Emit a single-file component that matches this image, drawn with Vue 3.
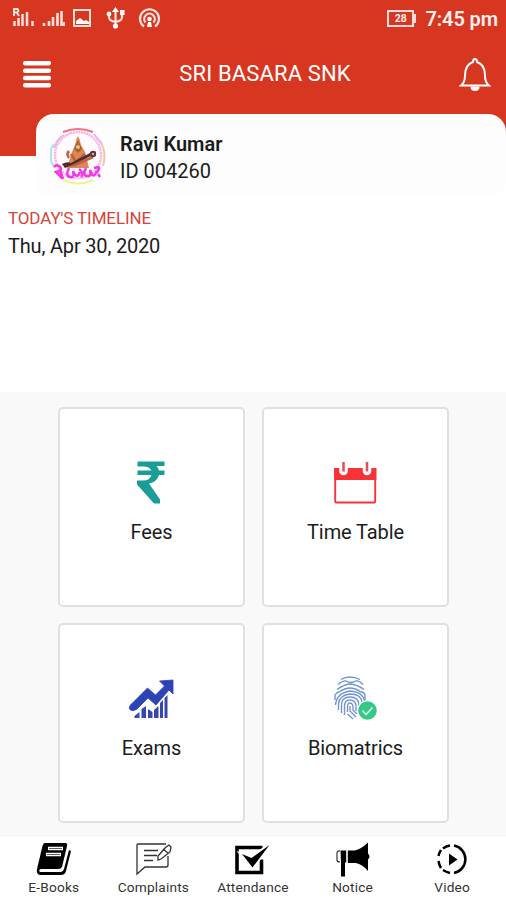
<script setup>
const prints = [
  'M341 679.500q4-2.500 9-2.500t10 2.500',
  'M338 684.500q5-4 8-3.500 5 3 10 0 3-.5 7 3.500',
  'M337 689.500q7-5 13-5.500 7 .5 14 5.500',
  'M335 700v-5q2-3 4-3 6-4 11-4t11 4q3 0 4 3v5',
  'M335.500 705q1-12 14.500-14 14 1 15 12',
  'M338.500 710v-6q1-9 11.500-10 11 0 12 8',
  'M341.500 713v-8q0-8 8.500-8t9 8v1',
  'M344.500 715v-9q0-6 5.500-6t6 6v5',
  'M347.500 712v-5q0-4 2.500-4t3 4v3l4 4',
  'M350 706v5l6 6',
  'M347.500 714l5.500 5'
]
</script>

<template>
  <main class="screen">
    <section class="hero">
      <div class="status">
        <svg class="status-icons" viewBox="0 0 170 37" fill="none" stroke="#ffe1dc">
          <path d="M14.500 26v-5M18.500 26v-8M22.500 26V14M27 26V12M32.500 26v-5" stroke-width="2.500" />
          <path d="M14 16V9h3.500q2 2-.5 3.500h-3M17 13l2 3" stroke-width="2" />
          <path d="M44 26v-3M49 26v-5M53 26v-9M57.500 26V13M61.500 26V11" stroke-width="2.600" />
          <path d="M61 25h3v-3" stroke-width="1.800" />
          <path d="M74 10h16v16H74z" stroke-width="2" />
          <path d="M76 24v-3l4-3 4 3 2-1 3 2v2z" fill="#fff" stroke="none" />
          <path d="M115.500 10v17M109 14v3q0 4 6.500 5 6.500-1 6.500-5v-4" stroke-width="2.200" />
          <path d="M112 12l3.500-5 3.500 5z" fill="#fff" stroke="none" />
          <g fill="#fff" stroke="none"><circle cx="109" cy="14" r="2.400" /><circle cx="115.500" cy="26" r="2.600" /><path d="M120 10h4.500v5H120z" /></g>
          <path d="M144 26.500a9.500 9.500 0 1 1 11 0M145.500 22.500a5.300 5.300 0 1 1 8 0" stroke-width="2.200" />
          <path d="M147 27l1-5h3l1 5z" fill="#fff" stroke="none" /><circle cx="149.500" cy="19" r="2.300" fill="#fff" stroke="none" />
        </svg>
        <div class="clock">
          <span class="battery"><span class="level">28</span><i class="cap"></i></span>
          <span class="time">7:45 pm</span>
        </div>
      </div>
      <header class="bar">
        <svg class="menu" viewBox="0 0 30 28" fill="#fff"><rect x="1" y="0" width="28" height="4.600" rx="2" /><rect x="1" y="7.400" width="28" height="4.600" rx="2" /><rect x="1" y="14.700" width="28" height="4.600" rx="2" /><rect x="1" y="22" width="28" height="4.600" rx="2" /></svg>
        <h1>SRI BASARA SNK</h1>
        <svg class="bell" viewBox="0 0 32 36" fill="none" stroke="#fff" stroke-width="2"><path d="M2 28.500h28q-4-3-4-10c0-7-2-11.500-8-13.500 0-4-4-4-4 0-6 2-8 6.500-8 13.500q0 7-4 10z" /><path d="M11.500 29.500h9q0 4.500-4.500 4.500t-4.500-4.500z" fill="#fff" stroke="none" /></svg>
      </header>
      <div class="profile">
        <svg class="avatar" viewBox="49 127 58 58" fill="none">
          <circle cx="78" cy="156" r="27" fill="#fffafd" />
          <g stroke-width="2"><path d="M63 132q15-6 30 0" stroke="#ee7480" /><path d="M54 144l-3 5v12l3 6" stroke="#a9e6f0" /><path d="M100 141q7 11 3 25" stroke="#edc9a0" /><path d="M63 180q15 7 30 0" stroke="#f3f289" /><path d="M54 148q3-9 10-13M94 134l8 10" stroke="#e5b5e6" /></g>
          <circle cx="78" cy="155" r="23" stroke="#f7b5e8" stroke-width="2.500" stroke-dasharray="2 .7" />
          <path d="M67 168l5-16 3-7 1.500-6 1.500-3 1.500 3 1.500 6 4 7 4 16z" fill="#df8753" /><path d="M74 149l4-9 4 9-4 4z" fill="#a5652f" /><circle cx="78" cy="147" r="2" fill="#f0bd83" />
          <path d="M69 158q-3-4 0-7M71 154l5 8 9-8M64 166l11-1 18-8" stroke="#bd6142" stroke-width="2.600" />
          <path d="M62 164q5-3 9-1l21-11q5-2 3 2l-21 10-9 4z" fill="#4d2b32" /><circle cx="93" cy="154" r="3.200" fill="#5e3540" /><circle cx="93" cy="154" r="1.200" fill="#e8b0a0" />
          <g stroke="#f03ae6" stroke-width="2.600"><path d="M54 167q3-3 6 0t-4 5l6 6M60 170l3 9M69 168q-4 8 1 9t3-6q4 9 7 1M79 169q6 4 2 8M86 168q-4 7 1 8t3-6q3 9 6 3M94 168q6-2 5 1t-4 4M98 174l2 3" /></g>
        </svg>
        <div class="identity"><strong>Ravi Kumar</strong><span>ID 004260</span></div>
      </div>
    </section>

    <section class="timeline"><h2>TODAY'S TIMELINE</h2><p>Thu, Apr 30, 2020</p></section>

    <section class="tiles">
      <article class="tile">
        <svg viewBox="128.500 454 46 54"><path d="M138 461.500h27v4.500h-8q2 2 2.500 4.500h5.500v4.500h-5.500q-2 7-10 8.500l11 16v4h-6l-17-19v-4h6q7 0 8.500-5.500H138v-4.500h14q-2-4-8-4h-6z" fill="#1a9d96" /></svg>
        <span>Fees</span>
      </article>
      <article class="tile">
        <svg viewBox="332 454 46 54"><path d="M334 468h42.500v12H334z" fill="#f83338" /><path d="M335.200 479v22.500q0 1 1 1h38q1 0 1-1V479" fill="none" stroke="#f83338" stroke-width="1.900" /><g fill="none"><path d="M343.500 463v8M367 463v8" stroke="#fff" stroke-width="8.500" stroke-linecap="round" /><path d="M343.500 462v9.500M367 462v9.500" stroke="#e84d50" stroke-width="2.500" /></g></svg>
        <span>Time Table</span>
      </article>
      <article class="tile">
        <svg viewBox="128 670 46 54"><path d="M130.500 705l17-17 8 7 9-9-5-5 13.500-1v14l-4-4-13 15-8-7-11 11q-4 3-6.500 1t0-5z" fill="#2e43b5" stroke="#2e43b5" stroke-width=".8" stroke-linejoin="round" /><path d="M134.500 718v-2l5-4v6zM141.500 718v-9l4.500-3v12zM148 718v-9l4.500 3v6zM154 718v-8l4.500-4v12zM160 718v-15l3-3v18zM164.500 718v-20l3-3v23z" fill="#3548b2" /></svg>
        <span>Exams</span>
      </article>
      <article class="tile">
        <svg viewBox="332 670 46 54"><g fill="none" stroke="#6f94d0" stroke-width="1.350"><path v-for="line in prints" :key="line" :d="line" /></g><circle cx="367.500" cy="710.500" r="10.300" fill="#fff" /><circle cx="367.500" cy="710.500" r="9.300" fill="#35c886" /><path d="M362.500 710.500l3.500 4 6.500-7" fill="none" stroke="#c9ffe4" stroke-width="1.800" /></svg>
        <span>Biomatrics</span>
      </article>
    </section>

    <nav>
      <a><svg viewBox="34 840 40 38"><path d="M45 843h20q3 0 2 3l-5 21q-1 2-4 2H41q-3 1-1 3h20q3 0 4-3l5-19 2 1-5 20q-1 4-5 4H41q-5 0-4-6l5-21q1-5 3-5z" /><path d="M48 848.500h15M46 854.500h15" stroke="#fff" stroke-width="3.500" /><path d="M49 848.500h13M47 854.500h13" stroke="#333" stroke-width=".8" /></svg><span>E-Books</span></a>
      <a><svg viewBox="133 840 40 38" fill="none" stroke="#333" stroke-width="1.300"><path d="M166 844h-28q-1 0-1 1v29l8-7h21q2 0 2-2v-9" /><path d="M144 850.500h14M144 855.500h13M144 860.500h9" /><path d="M158 856l8-9 3-2 2 2-1 5-9 7-3 1zM163 849l5 4" fill="#fff" /></svg><span>Complaints</span></a>
      <a><svg viewBox="233.500 840 40 38"><path d="M263 847.500h-25.500v25H262v-13" fill="none" stroke="#000" stroke-width="3.600" /><path d="M243 855l9 3 18-13-17 22z" stroke="#fff" stroke-width="4" fill="#fff" /><path d="M242.500 854l9.500 4 18-13-17 22.500z" /></svg><span>Attendance</span></a>
      <a><svg viewBox="333 840 40 38"><path d="M340.500 850.500h5.500v12h-1v14h-4v-14zM348 850.500h7q7-2 13-8v11q3 3 0 6v11.500q-6-7-12-8h-8z" /><path d="M340 851q-3-.5-3 2v7q0 2 3 2" fill="none" stroke="#222" stroke-width="1.100" /><path d="M347 850.500v12" stroke="#888" stroke-width=".8" /></svg><span>Notice</span></a>
      <a><svg viewBox="432 840 40 38" fill="none" stroke="#000" stroke-width="2.500"><path d="M454 845.500a14 14 0 0 1 0 27.500M450 845.500q-4 .5-7 3M441 850q-2 3-2.500 6M438.500 861q.5 4 2.500 7M443 870q3 2 7 3" /><path d="M449 853.500l8.500 6-8.500 6z" fill="#000" stroke="none" /></svg><span>Video</span></a>
    </nav>
  </main>
</template>

<style>
body { margin: 0; background: #fff; }
</style>
<style scoped>
.screen { width: 506px; height: 900px; overflow: hidden; display: flex; flex-direction: column; font-family: Roboto, sans-serif; color: #1b1b1b; background: #fff; }
.hero { height: 197px; background: linear-gradient(#d73621 0 156px, #fff 156px); }
.status { height: 37px; display: flex; justify-content: space-between; }
.status-icons { width: 170px; height: 37px; }
.clock { display: flex; align-items: center; gap: 9px; padding-right: 8px; color: #ffefed; }
.battery { display: flex; align-items: center; }
.level { box-sizing: border-box; width: 27px; height: 17px; border: 2px solid #ffdeda; font: bold 10.500px/14px Roboto, sans-serif; text-align: center; }
.cap { width: 2px; height: 9px; background: #ffdeda; }
.time { margin-top: 1px; font-size: 20px; font-weight: 600; line-height: 37px; letter-spacing: -.1px; white-space: nowrap; }
.bar { height: 77px; display: grid; grid-template-columns: 52px 1fr 52px; color: #fff; }
.menu { width: 30px; height: 28px; margin: 24px 0 0 22px; }
.bell { width: 32px; height: 36px; margin: 20px 0 0 5px; }
h1, h2, p { margin: 0; font-weight: 400; white-space: nowrap; }
h1 { text-align: center; padding-left: 24px; font-size: 22px; line-height: 73px; letter-spacing: .15px; }
.profile { margin-left: 36px; height: 83px; display: flex; background: #fdfdfd; border-radius: 18px; }
.avatar { width: 58px; height: 58px; margin: 13px 13px 0; }
.identity { display: flex; flex-direction: column; padding-top: 17px; font-size: 20px; line-height: 26.500px; }
.identity strong { font-weight: 600; }
.timeline { height: 195px; padding: 0 8px; box-sizing: border-box; }
h2 { padding-top: 9px; font-size: 17px; line-height: 24px; letter-spacing: -.12px; color: #d5443b; }
p { font-size: 20px; line-height: 32px; letter-spacing: -.18px; }
.tiles { height: 445px; padding: 15px 57px 15px 58px; box-sizing: border-box; display: grid; grid-template-columns: 187px 187px; grid-template-rows: 200px 200px; gap: 16px 17px; background: #f9f9f9; }
.tile { box-sizing: border-box; border: 2px solid #e0e0e0; border-radius: 5px; background: #fff; display: flex; flex-direction: column; align-items: center; padding-top: 45px; font-size: 20px; }
.tile svg { width: 46px; height: 54px; margin-right: 1px; }
.tile span { margin-top: 12px; line-height: 24px; letter-spacing: -.1px; white-space: nowrap; }
nav { height: 63px; display: grid; grid-template-columns: repeat(5, 99.600px); padding: 3px 4px 0; box-sizing: border-box; }
nav a { display: flex; flex-direction: column; align-items: center; }
nav svg { width: 40px; height: 38px; }
nav span { font-size: 13.700px; line-height: 18px; letter-spacing: .18px; color: #333; white-space: nowrap; }
</style>
